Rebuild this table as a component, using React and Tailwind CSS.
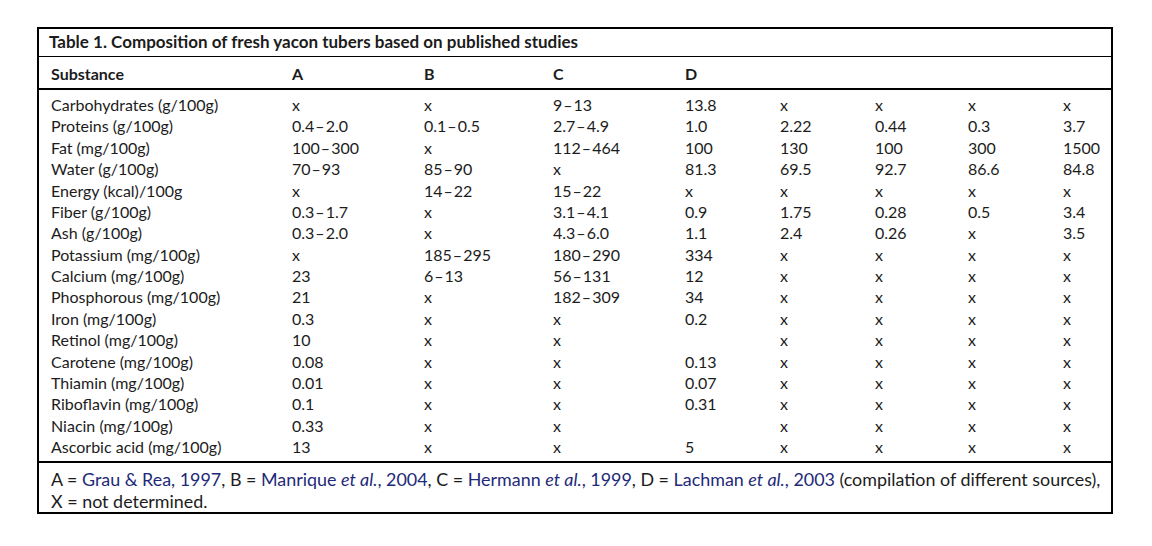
import React from "react";

const rows = [
  ["Carbohydrates (g/100g)", "x", "x", "9–13", "13.8", "x", "x", "x", "x"],
  ["Proteins (g/100g)", "0.4–2.0", "0.1–0.5", "2.7–4.9", "1.0", "2.22", "0.44", "0.3", "3.7"],
  ["Fat (mg/100g)", "100–300", "x", "112–464", "100", "130", "100", "300", "1500"],
  ["Water (g/100g)", "70–93", "85–90", "x", "81.3", "69.5", "92.7", "86.6", "84.8"],
  ["Energy (kcal)/100g", "x", "14–22", "15–22", "x", "x", "x", "x", "x"],
  ["Fiber (g/100g)", "0.3–1.7", "x", "3.1–4.1", "0.9", "1.75", "0.28", "0.5", "3.4"],
  ["Ash (g/100g)", "0.3–2.0", "x", "4.3–6.0", "1.1", "2.4", "0.26", "x", "3.5"],
  ["Potassium (mg/100g)", "x", "185–295", "180–290", "334", "x", "x", "x", "x"],
  ["Calcium (mg/100g)", "23", "6–13", "56–131", "12", "x", "x", "x", "x"],
  ["Phosphorous (mg/100g)", "21", "x", "182–309", "34", "x", "x", "x", "x"],
  ["Iron (mg/100g)", "0.3", "x", "x", "0.2", "x", "x", "x", "x"],
  ["Retinol (mg/100g)", "10", "x", "x", "", "x", "x", "x", "x"],
  ["Carotene (mg/100g)", "0.08", "x", "x", "0.13", "x", "x", "x", "x"],
  ["Thiamin (mg/100g)", "0.01", "x", "x", "0.07", "x", "x", "x", "x"],
  ["Riboflavin (mg/100g)", "0.1", "x", "x", "0.31", "x", "x", "x", "x"],
  ["Niacin (mg/100g)", "0.33", "x", "x", "", "x", "x", "x", "x"],
  ["Ascorbic acid (mg/100g)", "13", "x", "x", "5", "x", "x", "x", "x"],
];

const grid =
  "grid grid-cols-[241px_132px_129px_132px_95px_95px_93px_95px_1fr]";

// widen the range dash a little, the source typeface sets it loose
function Cell({ value }) {
  const parts = value.split("–");
  if (parts.length < 2) return <>{value}</>;
  return (
    <>
      {parts[0]}
      <span className="mx-[1px]">–</span>
      {parts[1]}
    </>
  );
}

function Ref({ children }) {
  return <span className="text-[#1e2a78]">{children}</span>;
}

export default function App() {
  return (
    <div
      className="bg-white w-[1152px] h-[546px] pt-[27px] pl-[37px] text-[#1c1c1c]"
      style={{ fontFamily: "Lato, 'Open Sans', sans-serif" }}
    >
      <div className="w-[1076px] border-2 border-black">
        {/* Title */}
        <div className="h-[28px] border-b border-black pl-[10px] pt-[2px] text-[17px] font-bold leading-[22px] whitespace-nowrap">
          Table 1. Composition of fresh yacon tubers based on published studies
        </div>

        {/* Header */}
        <div className={`${grid} h-[33px] border-b-2 border-black pl-[12px] pt-[3px] items-center text-[16px] font-bold`}>
          <div>Substance</div>
          <div>A</div>
          <div>B</div>
          <div>C</div>
          <div>D</div>
          <div></div>
          <div></div>
          <div></div>
          <div></div>
        </div>

        {/* Body */}
        <div className="pt-[4px] pb-[4px] border-b-2 border-black pl-[12px] text-[16px] leading-[21.375px]">
          {rows.map((r) => (
            <div key={r[0]} className={grid}>
              {r.map((c, i) => (
                <div key={i} className="whitespace-nowrap">
                  <Cell value={c} />
                </div>
              ))}
            </div>
          ))}
        </div>

        {/* Footnote */}
        <div className="pl-[12px] pt-[5px] pb-[0px] text-[17.9px] leading-[22px] whitespace-nowrap">
          A = <Ref>Grau &amp; Rea, 1997</Ref>, B = <Ref>Manrique <i>et al.</i>, 2004</Ref>, C ={" "}
          <Ref>Hermann <i>et al.</i>, 1999</Ref>, D = <Ref>Lachman <i>et al.</i>, 2003</Ref>{" "}
          (compilation of different sources),
          <br />X = not determined.
        </div>
      </div>
    </div>
  );
}
